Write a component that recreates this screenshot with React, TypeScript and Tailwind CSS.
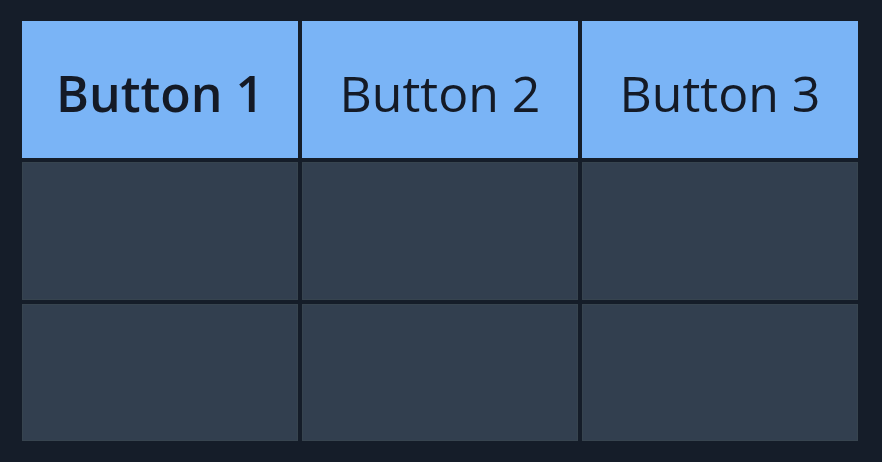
const buttons = ["Button 1", "Button 2", "Button 3"]

export default function App() {
  return (
    <div className="w-[882px] h-[462px] bg-[#151d29] pl-[22px] pr-[24px] py-[21px] font-['Open_Sans',sans-serif]">
      <div className="grid h-full grid-cols-3 grid-rows-3 gap-[4px]">
        {buttons.map((label, i) => (
          <button
            key={label}
            className={`flex items-center justify-center pt-[8px] bg-[#7ab4f6] text-[50px] text-[#141a26] ${
              i === 0 ? "font-semibold" : "font-normal"
            }`}
          >
            {label}
          </button>
        ))}
        {Array.from({ length: 6 }).map((_, i) => (
          <div key={i} className="bg-[#323f4f] border border-[#37444f]" />
        ))}
      </div>
    </div>
  )
}
